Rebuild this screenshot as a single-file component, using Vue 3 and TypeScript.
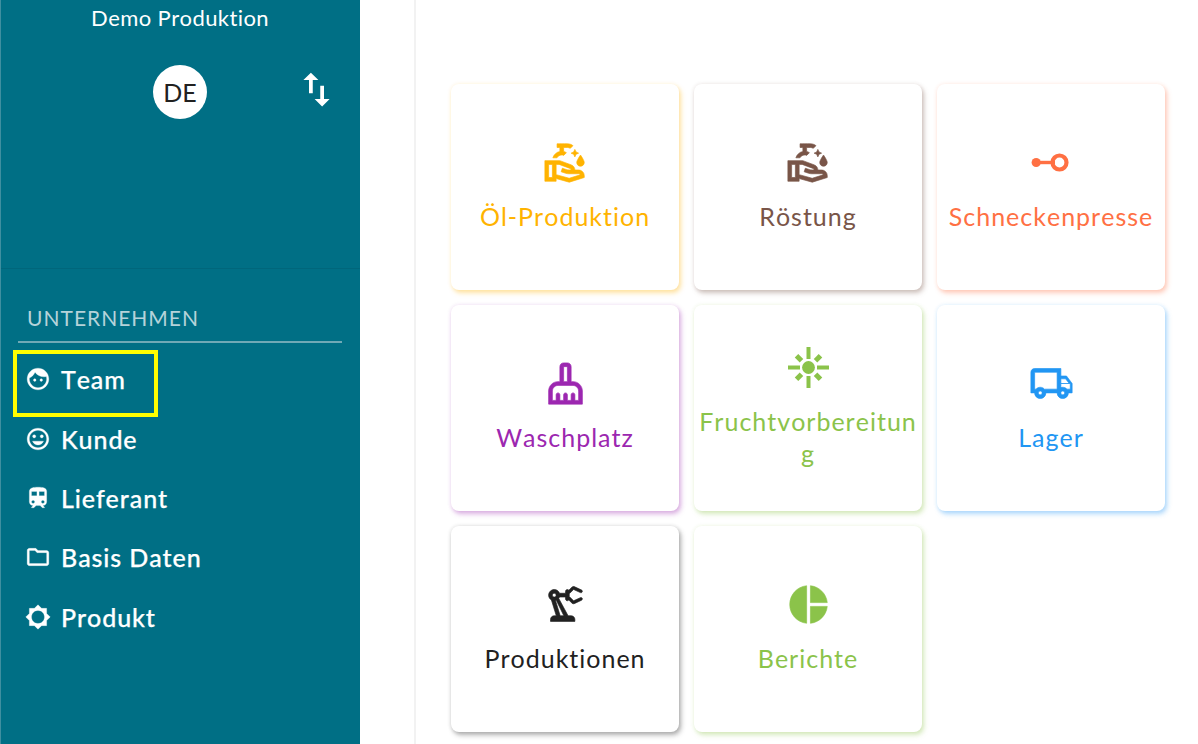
<script setup lang="ts">
interface NavItem {
  label: string
  icon: string
}

interface Tile {
  label: string
  color: string
  icon?: string
  custom?: 'press' | 'sun'
}

const handIcon = 'M16.99 5l.63 1.37L18.99 7l-1.37.63L16.99 9l-.63-1.37L14.99 7l1.37-.63L16.99 5M20 14c1.1 0 2-.9 2-2 0-1.1-2-4-2-4s-2 2.9-2 4c0 1.1.9 2 2 2zM11 6.1V4h2c.57 0 1.1.17 1.55.45l1.43-1.43C15.15 2.39 14.13 2 13 2c-1.48 0-5.5 0-5.5 0v2H9v2.11C7.22 6.48 5.8 7.79 5.25 9.5h2.16C7.94 8.61 8.9 8 10 8c.37 0 .72.07 1.05.2l1.44-1.44C12.04 6.48 11.53 6.22 11 6.1zM22 19v1l-8 2.5-7-1.94V22H1V11h7.97l6.16 2.3C16.25 13.72 17 14.8 17 16h2c1.66 0 3 1.34 3 3zM5 20v-7H3v7h2zm14.9-1.43C19.74 18.24 19.39 18 19 18h-5.35c-.54 0-1.07-.09-1.58-.26l-2.38-.79.63-1.9 2.38.79C13.01 15.95 15 16 15 16c0-.37-.23-.7-.57-.83L8.61 13H7v5.48l6.97 1.93 5.93-1.84z'

const navItems: NavItem[] = [
  { label: 'Team', icon: 'M9 11.75c-.69 0-1.25.56-1.25 1.25s.56 1.25 1.25 1.25 1.25-.56 1.25-1.25-.56-1.25-1.25-1.25zm6 0c-.69 0-1.25.56-1.25 1.25s.56 1.25 1.25 1.25 1.25-.56 1.25-1.25-.56-1.25-1.25-1.25zM12 2C6.48 2 2 6.48 2 12s4.48 10 10 10 10-4.48 10-10S17.52 2 12 2zm0 18c-4.41 0-8-3.59-8-8 0-.29.02-.58.05-.86 2.36-1.05 4.23-2.98 5.21-5.37C11.07 8.33 14.05 10 17.42 10c.78 0 1.53-.09 2.25-.26.21.71.33 1.47.33 2.26 0 4.41-3.59 8-8 8z' },
  { label: 'Kunde', icon: 'M11.99 2C6.47 2 2 6.48 2 12s4.47 10 9.99 10C17.52 22 22 17.52 22 12S17.52 2 11.99 2zM12 20c-4.42 0-8-3.58-8-8s3.58-8 8-8 8 3.58 8 8-3.58 8-8 8zm3.5-9c.83 0 1.5-.67 1.5-1.5S16.33 8 15.5 8 14 8.67 14 9.5s.67 1.5 1.5 1.5zm-7 0c.83 0 1.5-.67 1.5-1.5S9.33 8 8.5 8 7 8.67 7 9.5 7.67 11 8.5 11zm3.5 6.5c2.33 0 4.31-1.46 5.11-3.5H6.89c.8 2.04 2.78 3.5 5.11 3.5z' },
  { label: 'Lieferant', icon: 'M12 2c-4 0-8 .5-8 4v9.5C4 17.43 5.57 19 7.5 19L6 20.5v.5h2.23l2-2H14l2 2h2v-.5L16.5 19c1.93 0 3.5-1.57 3.5-3.5V6c0-3.5-3.58-4-8-4zM7.5 17c-.83 0-1.5-.67-1.5-1.5S6.67 14 7.5 14s1.5.67 1.5 1.5S8.33 17 7.5 17zm3.5-7H6V6h5v4zm2 0V6h5v4h-5zm3.5 7c-.83 0-1.5-.67-1.5-1.5s.67-1.5 1.5-1.5 1.5.67 1.5 1.5-.67 1.5-1.5 1.5z' },
  { label: 'Basis Daten', icon: 'M9.17 6l2 2H20v10H4V6h5.17M10 4H4c-1.1 0-1.99.9-1.99 2L2 18c0 1.1.9 2 2 2h16c1.1 0 2-.9 2-2V8c0-1.1-.9-2-2-2h-8l-2-2z' },
  { label: 'Produkt', icon: 'M20 15.31L23.31 12 20 8.69V4h-4.69L12 .69 8.69 4H4v4.69L.69 12 4 15.31V20h4.69L12 23.31 15.31 20H20v-4.69zM12 18c-3.31 0-6-2.69-6-6s2.69-6 6-6 6 2.69 6 6-2.69 6-6 6z' }
]

const tiles: Tile[] = [
  { label: 'Öl-Produktion', color: '#ffb300', icon: handIcon },
  { label: 'Röstung', color: '#795548', icon: handIcon },
  { label: 'Schneckenpresse', color: '#ff7043', custom: 'press' },
  { label: 'Waschplatz', color: '#9c27b0', icon: 'M16 11h-1V3c0-1.1-.9-2-2-2h-2c-1.1 0-2 .9-2 2v8H8c-2.76 0-5 2.24-5 5v7h18v-7c0-2.76-2.24-5-5-5zm-5-8h2v8h-2V3zm8 18h-2v-3c0-.55-.45-1-1-1s-1 .45-1 1v3h-2v-3c0-.55-.45-1-1-1s-1 .45-1 1v3H9v-3c0-.55-.45-1-1-1s-1 .45-1 1v3H5v-5c0-1.65 1.35-3 3-3h8c1.65 0 3 1.35 3 3v5z' },
  { label: 'Fruchtvorbereitung', color: '#8bc34a', custom: 'sun' },
  { label: 'Lager', color: '#2196f3', icon: 'M20 8h-3V4H3c-1.1 0-2 .9-2 2v11h2c0 1.66 1.34 3 3 3s3-1.34 3-3h6c0 1.66 1.34 3 3 3s3-1.34 3-3h2v-5l-3-4zm-.5 1.5l1.96 2.5H17V9.5h2.5zM6 18c-.55 0-1-.45-1-1s.45-1 1-1 1 .45 1 1-.45 1-1 1zm2.22-3c-.55-.61-1.33-1-2.22-1s-1.67.39-2.22 1H3V6h12v9H8.22zM17 12h5v3h-1.78c-.55-.61-1.33-1-2.22-1-.35 0-.69.06-1 .17V12zM18 18c-.55 0-1-.45-1-1s.45-1 1-1 1 .45 1 1-.45 1-1 1z' },
  { label: 'Produktionen', color: '#212121', icon: 'M19.93 8.35l-3.6 1.68L14 7.7V6.3l2.33-2.33 3.6 1.68c.38.18.82.01 1-.36.18-.38.01-.82-.36-1l-3.92-1.83c-.38-.18-.83-.1-1.13.2L13.78 4.4C13.6 4.16 13.32 4 13 4c-.55 0-1 .45-1 1v1H8.82C8.4 4.84 7.3 4 6 4 4.34 4 3 5.34 3 7c0 1.1.6 2.05 1.48 2.58L7.08 18H6c-1.1 0-2 .9-2 2v1h13v-1c0-1.1-.9-2-2-2h-1.62L8.41 8.77c.17-.24.31-.49.41-.77H12v1c0 .55.45 1 1 1 .32 0 .6-.16.78-.4l1.74 1.74c.3.3.75.38 1.13.2l3.92-1.83c.38-.18.54-.62.36-1-.18-.37-.62-.54-1-.36zM6 8c-.55 0-1-.45-1-1s.45-1 1-1 1 .45 1 1-.45 1-1 1zm5.11 10H9.17l-2.46-8.03c.15-.02.29-.06.43-.1L11.11 18z' },
  { label: 'Berichte', color: '#8bc34a', icon: 'M11 2v20c-5.07-.5-9-4.79-9-10s3.93-9.5 9-10zm2.03 0v8.99H22c-.47-4.74-4.24-8.52-8.97-8.99zm0 11.01V22c4.74-.47 8.5-4.25 8.97-8.99h-8.97z' }
]

const tileStyle = (color: string) => ({
  color,
  boxShadow: `0 0 4px ${color}1f, 2px 3px 5px ${color}59`
})
</script>

<template>
  <div class="page">
    <aside class="sidebar">
      <header class="head">
        <div class="title">Demo Produktion</div>
        <div class="account">
          <span class="avatar">DE</span>
          <svg class="swap" viewBox="0 0 24 24" fill="currentColor">
            <path d="M16 17.01V10h-2v7.01h-3L15 21l4-3.99h-3zM9 3L5 6.99h3V14h2V6.99h3L9 3z" />
          </svg>
        </div>
      </header>
      <nav class="nav">
        <div class="section">UNTERNEHMEN</div>
        <a
          v-for="(item, i) in navItems"
          :key="item.label"
          class="nav-item"
          :class="{ focused: i === 0 }"
        >
          <svg class="nav-icon" viewBox="0 0 24 24" fill="currentColor">
            <path :d="item.icon" />
          </svg>
          <span>{{ item.label }}</span>
        </a>
      </nav>
    </aside>

    <main class="main">
      <div class="tiles">
        <div
          v-for="tile in tiles"
          :key="tile.label"
          class="tile"
          :style="tileStyle(tile.color)"
        >
          <svg v-if="tile.icon" class="tile-icon" viewBox="0 0 24 24" fill="currentColor">
            <path :d="tile.icon" />
          </svg>
          <svg v-else-if="tile.custom === 'press'" class="tile-icon" viewBox="0 0 45 45" fill="currentColor">
            <circle cx="7.2" cy="22.5" r="4.6" />
            <rect x="10" y="20.8" width="16" height="3.4" />
            <circle cx="30.5" cy="22.5" r="7" fill="none" stroke="currentColor" stroke-width="4.2" />
          </svg>
          <svg v-else class="tile-icon" viewBox="0 0 45 45" fill="currentColor">
            <circle cx="22.5" cy="22.5" r="6.4" />
            <rect x="20.5" y="2" width="4" height="12" />
            <rect x="20.5" y="31" width="4" height="12" />
            <rect x="2" y="20.5" width="12" height="4" />
            <rect x="31" y="20.5" width="12" height="4" />
            <rect x="9.5" y="10.8" width="7" height="5" transform="rotate(45 13 13.3)" />
            <rect x="28.5" y="10.8" width="7" height="5" transform="rotate(-45 32 13.3)" />
            <rect x="9.5" y="29.2" width="7" height="5" transform="rotate(-45 13 31.7)" />
            <rect x="28.5" y="29.2" width="7" height="5" transform="rotate(45 32 31.7)" />
          </svg>
          <div class="tile-label">{{ tile.label }}</div>
        </div>
      </div>
    </main>
  </div>
</template>

<style scoped>
.page {
  display: flex;
  height: 744px;
  overflow: hidden;
  background: #fff;
  font-family: Lato, "Liberation Sans", sans-serif;
  font-kerning: none;
}

.sidebar {
  width: 360px;
  flex-shrink: 0;
  box-sizing: border-box;
  background: #006f85;
  border-left: 1px solid #3f8fa0;
  color: #fff;
}

.head {
  height: 269px;
  box-sizing: border-box;
  padding-right: 1px;
  border-bottom: 1px solid #00667b;
}

.title {
  padding-top: 4px;
  font-size: 22px;
  line-height: 28px;
  letter-spacing: 0.4px;
  text-align: center;
}

.account {
  display: grid;
  grid-template-columns: 1fr 54px 1fr;
  align-items: center;
  margin-top: 33px;
}

.avatar {
  grid-column: 2;
  width: 54px;
  height: 54px;
  border-radius: 50%;
  background: #fff;
  color: #212121;
  font-size: 25px;
  line-height: 54px;
  text-align: center;
}

.swap {
  width: 45px;
  height: 45px;
  margin-left: 87px;
  margin-top: -5px;
}

.nav {
  padding: 34px 18px 0 17px;
}

.section {
  padding: 0 9px 8px;
  border-bottom: 2px solid #70a9b6;
  color: #b5d3da;
  font-size: 21px;
  line-height: 30px;
  letter-spacing: 1px;
}

.nav-item {
  display: flex;
  align-items: center;
  gap: 10px;
  height: 59.4px;
  margin-left: -5px;
  padding-left: 12px;
  font-size: 25px;
  font-weight: 500;
  letter-spacing: 0.9px;
  -webkit-text-stroke: 0.25px #fff;
}

.nav-item.focused {
  width: 145px;
  height: 67px;
  box-sizing: border-box;
  margin-top: 7px;
  margin-bottom: -8px;
  padding-bottom: 9px;
  outline: 4px solid #ffff00;
  outline-offset: -4px;
}

.nav-icon {
  width: 26px;
  height: 26px;
  flex-shrink: 0;
}

.nav-icon path {
  stroke: currentColor;
  stroke-width: 0.25;
}

.main {
  flex: 1;
  margin-left: 54px;
  padding: 84px 0 0 35px;
  border-left: 2px solid #f2f2f2;
}

.tiles {
  display: grid;
  grid-template-columns: repeat(3, 228px);
  grid-auto-rows: 206px;
  gap: 15px;
}

.tile {
  display: flex;
  flex-direction: column;
  align-items: center;
  justify-content: center;
  gap: 15px;
  padding: 0 4px 3px;
  border-radius: 8px;
  background: #fff;
}

.tile-icon {
  width: 45px;
  height: 45px;
  flex-shrink: 0;
}

.tile-icon path {
  stroke: currentColor;
  stroke-width: 0.35;
}

.tile-label {
  width: 100%;
  font-size: 25px;
  line-height: 32px;
  letter-spacing: 1px;
  text-align: center;
  overflow-wrap: anywhere;
}
</style>
